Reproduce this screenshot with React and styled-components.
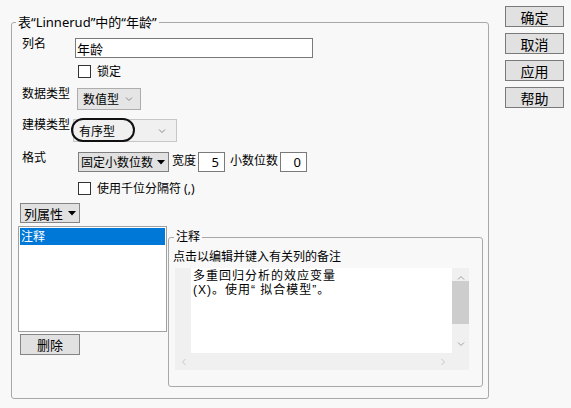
import React from "react";
import styled, { createGlobalStyle } from "styled-components";

const GlobalStyle = createGlobalStyle`
  html, body {
    margin: 0;
    padding: 0;
    background: #f8f8f8;
  }
  body {
    font-family: "Noto Sans", "Noto Sans CJK SC", sans-serif;
    font-size: 12px;
    color: #000;
  }
  * {
    box-sizing: border-box;
  }
`;

const Chevron = ({ dir = "down", color = "#8a8a8a" }) => {
  const paths = {
    down: "M1 1.5 L4 4.5 L7 1.5",
    up: "M1 4.5 L4 1.5 L7 4.5",
    left: "M4.5 1 L1.5 4 L4.5 7",
    right: "M1.5 1 L4.5 4 L1.5 7",
  };
  const vertical = dir === "up" || dir === "down";
  return (
    <svg width={vertical ? 8 : 6} height={vertical ? 6 : 8} viewBox={vertical ? "0 0 8 6" : "0 0 6 8"}>
      <path d={paths[dir]} fill="none" stroke={color} strokeWidth="1" />
    </svg>
  );
};

const Caret = () => (
  <svg width="8" height="5" viewBox="0 0 8 5">
    <polygon points="0,0 8,0 4,4.5" fill="#000" />
  </svg>
);

export default function App() {
  return (
    <>
      <GlobalStyle />
      <Page>
        <MainGroup>
          <Title>表“Linnerud”中的“年龄”</Title>
          <Body>
            <Row $top={8}>
              <FieldLabel>列名</FieldLabel>
              <TextInput readOnly defaultValue="年龄" $w={238} $indent={2} />
            </Row>
            <Row $top={7}>
              <FieldLabel />
              <CheckRow $indent={5}>
                <Checkbox />
                <span>锁定</span>
              </CheckRow>
            </Row>
            <Row $top={10}>
              <FieldLabel>数据类型</FieldLabel>
              <Select $w={64} $h={22} $indent={4} $bg="#e5e5e5" $border="#adadad">
                <span>数值型</span>
                <Chevron />
              </Select>
            </Row>
            <Row $top={9}>
              <FieldLabel>建模类型</FieldLabel>
              <Select $w={104} $h={23} $indent={0} $bg="#f0f0f0" $border="#c6c6c6" $pad={10}>
                <span>有序型</span>
                <Chevron />
                <Highlight />
              </Select>
            </Row>
            <Row $top={10}>
              <FieldLabel>格式</FieldLabel>
              <Select $w={91} $h={20} $indent={5} $bg="#e1e1e1" $border="#7f7f7f" $pad={3}>
                <span>固定小数位数</span>
                <Caret />
              </Select>
              <InlineLabel>宽度</InlineLabel>
              <TextInput readOnly defaultValue="5" $w={27} $align="right" />
              <InlineLabel $gap={5}>小数位数</InlineLabel>
              <TextInput readOnly defaultValue="0" $w={27} $align="right" />
            </Row>
            <Row $top={10}>
              <FieldLabel />
              <CheckRow $indent={5}>
                <Checkbox />
                <span>使用千位分隔符 (,)</span>
              </CheckRow>
            </Row>
            <Row $top={8}>
              <SmallButton>
                列属性 <Caret />
              </SmallButton>
            </Row>
            <Bottom>
              <ListColumn>
                <ListBox>
                  <ListItem $selected>注释</ListItem>
                </ListBox>
                <SmallButton $h={21}>删除</SmallButton>
              </ListColumn>
              <NoteGroup>
                <NoteLegend>注释</NoteLegend>
                <Hint>点击以编辑并键入有关列的备注</Hint>
                <Editor>
                  <Gutter />
                  <EditorText>
                    <EditorLine>多重回归分析的效应变量</EditorLine>
                    <EditorLine>(X)。使用“ 拟合模型”。</EditorLine>
                  </EditorText>
                  <VScroll>
                    <Chevron dir="up" color="#a0a0a0" />
                    <Thumb />
                    <Chevron dir="down" color="#a0a0a0" />
                  </VScroll>
                  <HScroll>
                    <Chevron dir="left" color="#c8c8c8" />
                    <Chevron dir="right" color="#c8c8c8" />
                  </HScroll>
                  <Corner />
                </Editor>
              </NoteGroup>
            </Bottom>
          </Body>
        </MainGroup>
        <ButtonColumn>
          <DialogButton>确定</DialogButton>
          <DialogButton>取消</DialogButton>
          <DialogButton>应用</DialogButton>
          <DialogButton>帮助</DialogButton>
        </ButtonColumn>
      </Page>
    </>
  );
}

const Page = styled.div`
  display: flex;
  align-items: flex-start;
  width: 571px;
  height: 408px;
  padding-left: 11px;
  overflow: hidden;
`;

const MainGroup = styled.fieldset`
  margin: 14px 0 0 0;
  padding: 0;
  width: 478px;
  height: 385px;
  border: 1px solid #a8a8a8;
  border-radius: 3px;
  min-width: 0;
`;

const Title = styled.legend`
  margin-left: 4px;
  padding: 0 2px;
  font-size: 13px;
  line-height: 16px;
`;

const Body = styled.div`
  display: flex;
  flex-direction: column;
  padding-left: 6px;
`;

const Row = styled.div`
  display: flex;
  align-items: flex-start;
  margin-top: ${(p) => p.$top}px;
`;

const FieldLabel = styled.div`
  width: 55px;
  flex: none;
  padding-left: 4px;
  margin-top: -2px;
  line-height: 16px;
  white-space: nowrap;
`;

const TextInput = styled.input`
  width: ${(p) => p.$w}px;
  height: 20px;
  margin: 0 0 0 ${(p) => p.$indent || 0}px;
  padding: 0 ${(p) => (p.$align === "right" ? 5 : 1)}px 0 1px;
  border: 1px solid #7a7a7a;
  background: #fff;
  font: 13px "Noto Sans", "Noto Sans CJK SC", sans-serif;
  line-height: 18px;
  color: #000;
  text-align: ${(p) => p.$align || "left"};
  outline: none;
`;

const CheckRow = styled.label`
  display: flex;
  align-items: center;
  gap: 6px;
  height: 13px;
  margin-left: ${(p) => p.$indent}px;
  line-height: 16px;
`;

const Checkbox = styled.span`
  width: 13px;
  height: 13px;
  border: 1px solid #333;
  background: #fff;
  flex: none;
`;

const Select = styled.div`
  position: relative;
  display: flex;
  align-items: center;
  justify-content: space-between;
  width: ${(p) => p.$w}px;
  height: ${(p) => p.$h}px;
  margin-left: ${(p) => p.$indent}px;
  padding: 0 ${(p) => p.$pad ?? 7}px 0 ${(p) => (p.$pad === 3 ? 2 : 5)}px;
  background: ${(p) => p.$bg};
  border: 1px solid ${(p) => p.$border};
  white-space: nowrap;
  flex: none;
`;

const Highlight = styled.span`
  position: absolute;
  left: -3px;
  top: -2px;
  width: 64px;
  height: 24px;
  border: 2px solid #111;
  border-radius: 12px;
`;

const InlineLabel = styled.span`
  margin: 0 2px 0 ${(p) => p.$gap ?? 3}px;
  line-height: 18px;
  white-space: nowrap;
`;

const SmallButton = styled.div`
  display: flex;
  align-items: center;
  justify-content: center;
  gap: 5px;
  width: 60px;
  height: ${(p) => p.$h || 20}px;
  margin-left: 2px;
  background: #e1e1e1;
  border: 1px solid #858585;
  font-size: 13px;
`;

const Bottom = styled.div`
  display: flex;
  align-items: flex-start;
  margin-top: 3px;
`;

const ListColumn = styled.div`
  display: flex;
  flex-direction: column;
  gap: 2px;
  width: 149px;
  flex: none;
`;

const ListBox = styled.div`
  height: 106px;
  padding: 1px;
  background: #fff;
  border: 1px solid #a0a0a0;
`;

const ListItem = styled.div`
  height: 17px;
  padding-left: 1px;
  line-height: 17px;
  font-size: 12px;
  background: ${(p) => (p.$selected ? "#0078d7" : "transparent")};
  color: ${(p) => (p.$selected ? "#fff" : "#000")};
`;

const NoteGroup = styled.fieldset`
  margin: 3px 0 0 1px;
  padding: 0;
  width: 315px;
  height: 158px;
  border: 1px solid #a8a8a8;
  border-radius: 3px;
  min-width: 0;
`;

const NoteLegend = styled.legend`
  margin-left: 5px;
  padding: 0 2px;
  font-size: 12px;
  line-height: 16px;
`;

const Hint = styled.div`
  margin-top: 4px;
  padding-left: 4px;
  line-height: 16px;
  color: #000;
`;

const Editor = styled.div`
  display: grid;
  grid-template-columns: 16px 1fr 17px;
  grid-template-rows: 1fr 17px;
  width: 294px;
  height: 102px;
  margin: 3px 0 0 6px;
  background: #f0f0f0;
`;

const Gutter = styled.div`
  background: #f0f0f0;
`;

const EditorText = styled.div`
  padding: 1px 2px 0;
  background: #fff;
  font-family: "Liberation Sans", "Noto Sans CJK SC", sans-serif;
  font-size: 12px;
  letter-spacing: 1px;
`;

const EditorLine = styled.div`
  height: 14px;
  line-height: 14px;
`;

const VScroll = styled.div`
  display: flex;
  flex-direction: column;
  align-items: center;
  justify-content: space-between;
  padding: 7px 0 6px;
`;

const Thumb = styled.div`
  align-self: stretch;
  height: 43px;
  margin-top: -8px;
  margin-bottom: 10px;
  background: #cdcdcd;
`;

const HScroll = styled.div`
  grid-column: 1 / 3;
  display: flex;
  align-items: center;
  justify-content: space-between;
  padding: 0 6px 0 6px;
`;

const Corner = styled.div`
  background: #f0f0f0;
`;

const ButtonColumn = styled.div`
  display: flex;
  flex-direction: column;
  gap: 6px;
  margin: 6px 0 0 16px;
`;

const DialogButton = styled.div`
  display: flex;
  align-items: center;
  justify-content: center;
  width: 59px;
  height: 21px;
  background: #e1e1e1;
  border: 1px solid #7a7a7a;
  font-size: 14px;
`;
